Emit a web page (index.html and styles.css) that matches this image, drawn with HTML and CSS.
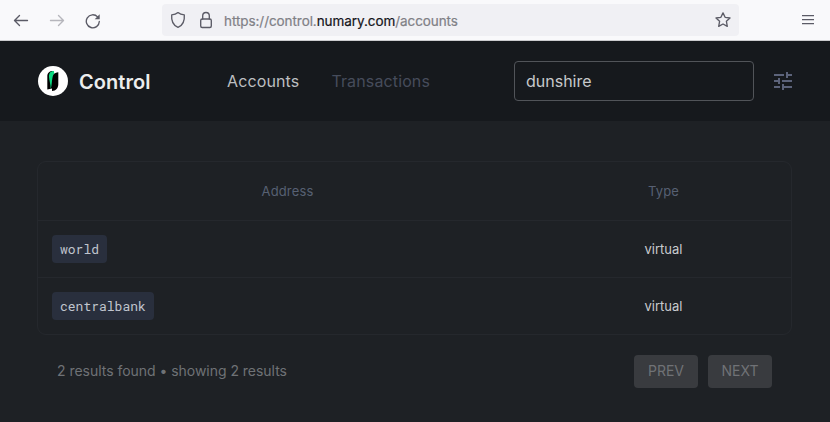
FILE: index.html
```html
<!DOCTYPE html>
<html lang="en">
<head>
<meta charset="utf-8">
<title>Control</title>
<link rel="stylesheet" href="styles.css">
</head>
<body>
<div class="toolbar">
  <div class="nav-buttons">
    <svg width="16" height="16" viewBox="0 0 16 16" class="ico"><path d="M14.500 7.500H1.500M6.500 2.500 1.500 7.500 6.500 12.500"/></svg>
    <svg width="16" height="16" viewBox="0 0 16 16" class="ico faded"><path d="M1.500 7.500h13M9.500 2.500 14.500 7.500 9.500 12.500"/></svg>
    <svg width="16" height="16" viewBox="0 0 16 16" class="ico"><path d="M14.300 8.500A6.500 6.500 0 1 1 12.600 3.900"/><path class="solid" d="M14.700 1.300v5H9.700z"/></svg>
  </div>
  <div class="urlbar">
    <svg width="16" height="18" viewBox="0 0 16 18" class="ico"><path d="M8 1.600C9.500 2.900 12 3.700 14.300 3.800C14.800 9.600 12.700 14.500 8 16.400C3.300 14.500 1.200 9.600 1.700 3.800C4 3.700 6.500 2.900 8 1.600z"/></svg>
    <svg width="14" height="18" viewBox="0 0 14 18" class="ico lock"><rect x="1.700" y="8" width="10.600" height="8.500" rx="1.500"/><path d="M3.700 8V4.800a3.300 3.300 0 0 1 6.600 0V8"/></svg>
    <div class="url">https://control.<b>numary.com</b>/accounts</div>
    <svg width="18" height="18" viewBox="0 0 18 18" class="ico star"><path d="M9 1.900 11.100 6.300 16 7 12.400 10.300 13.300 15.400 9 13 4.700 15.400 5.600 10.300 2 7 6.900 6.300z"/></svg>
  </div>
  <svg width="12" height="12" viewBox="0 0 12 12" class="ico menu"><path d="M0 1.600h12M0 5.600h12M0 9.600h12"/></svg>
</div>
<header class="header">
  <svg class="logo" width="30" height="30" viewBox="0 0 30 30"><circle cx="15" cy="15" r="15" fill="#fff"/><path fill="#000" d="M9.300 10C9.300 7 11.500 5 15 5L14 22.500 9.300 23.500z"/><path fill="#000" d="M20.300 6.200V18C20.300 22 18 25 14 25V12C14 8.500 16 6.800 20.300 6.200z"/><path fill="#0bd880" d="M16 5C12.500 5 10.800 7 11 11 11.200 15 12.800 18 12.600 23 14.300 20 13.500 10 16.200 7.500z"/></svg>
  <div class="brand">Control</div>
  <nav class="nav"><a class="active">Accounts</a><a>Transactions</a></nav>
  <div class="search">dunshire</div>
  <svg class="tune" width="24" height="24" viewBox="0 0 24 24"><path d="M3 17v2h6v-2H3zM3 5v2h10V5H3zm10 16v-2h8v-2h-8v-2h-2v6h2zM7 9v2H3v2h4v2h2V9H7zm14 4v-2H11v2h10zm-6-4h2V7h4V5h-4V3h-2v6z"/></svg>
</header>
<main class="main">
  <div class="table">
    <div class="row head"><div>Address</div><div class="type">Type</div></div>
    <div class="row"><div class="address"><code>world</code></div><div class="type">virtual</div></div>
    <div class="row"><div class="address"><code>centralbank</code></div><div class="type">virtual</div></div>
  </div>
  <div class="footer">
    <div class="summary">2 results found • showing 2 results</div>
    <div class="pager"><button disabled>PREV</button><button disabled>NEXT</button></div>
  </div>
</main>
</body>
</html>
```
FILE: styles.css
```css
* { box-sizing: border-box; }
body {
  margin: 0;
  height: 422px;
  overflow: hidden;
  background: #1e2125;
  color: #c9cbcf;
  font-family: Inter, sans-serif;
}
svg { display: block; flex: none; }
.toolbar {
  height: 41px;
  display: flex;
  align-items: flex-start;
  padding: 4px 16px 0 13px;
  background: #f9f9fb;
  border-bottom: 1px solid #cbcbce;
}
.ico { fill: none; stroke: #5b5b66; stroke-width: 1.35; stroke-linecap: round; stroke-linejoin: round; }
.faded { opacity: .42; }
.solid { fill: #5b5b66; stroke: none; }
.nav-buttons { display: flex; gap: 20px; width: 149px; padding-top: 9px; }
.urlbar {
  width: 577px;
  height: 32px;
  display: flex;
  align-items: center;
  padding: 0 7px 0 8px;
  background: #f0f0f4;
  border-radius: 4px;
}
.lock { margin-left: 13px; }
.url { flex: 1; margin-left: 11px; padding-top: 2px; font-size: 13.5px; line-height: 18px; color: #808086; -webkit-text-stroke: .2px; white-space: nowrap; letter-spacing: -.07px; }
.url b { font-weight: 400; color: #15141a; }
.menu { margin: 10px 0 0 auto; stroke-linecap: butt; stroke-width: 1.25; }
.header {
  height: 80px;
  display: flex;
  align-items: center;
  padding: 0 35px 0 38px;
  background: #16191d;
}
.brand { width: 148px; margin-left: 11px; font-size: 20px; font-weight: 600; color: #eceded; padding-top: 1px; letter-spacing: .05px; }
.nav { display: flex; gap: 32px; font-size: 16px; color: #464c5b; letter-spacing: .13px; }
.nav .active { color: #bdbfc1; }
.search {
  width: 240px;
  height: 40px;
  margin-left: auto;
  padding: 0 11px;
  border: 1px solid #515459;
  border-radius: 4px;
  font-size: 16px;
  line-height: 39px;
  color: #c7c9cb;
}
.tune { margin-left: 17px; fill: #5c637a; }
.main { padding: 40px 38px 0 37px; }
.table { border: 1px solid #25282d; border-radius: 9px; font-size: 13px; }
.row {
  height: 57px;
  display: grid;
  grid-template-columns: 499px 1fr;
  align-items: center;
  text-align: center;
  border-top: 1px solid #25282d;
}
.head { height: 58px; border: 0; color: #576073; letter-spacing: .14px; }
.address { display: flex; padding-left: 14px; }
.type { padding-right: 1px; }
code {
  height: 28px;
  padding: 0 8px;
  border-radius: 4px;
  background: #292f3d;
  color: #c0c5ce;
  font: 13px/28px "Roboto Mono", "DejaVu Sans Mono", monospace;
}
.footer { display: flex; justify-content: space-between; align-items: center; padding: 20px 20px 0; }
.summary { font-size: 14px; color: #6f7276; letter-spacing: -.03px; padding-bottom: 2px; }
.pager { display: flex; gap: 10px; }
button {
  width: 64px;
  height: 33px;
  padding: 0 0 2px;
  border: 0;
  border-radius: 4px;
  background: #393b3f;
  color: #707276;
  font: 14px Inter, sans-serif;
}
```
